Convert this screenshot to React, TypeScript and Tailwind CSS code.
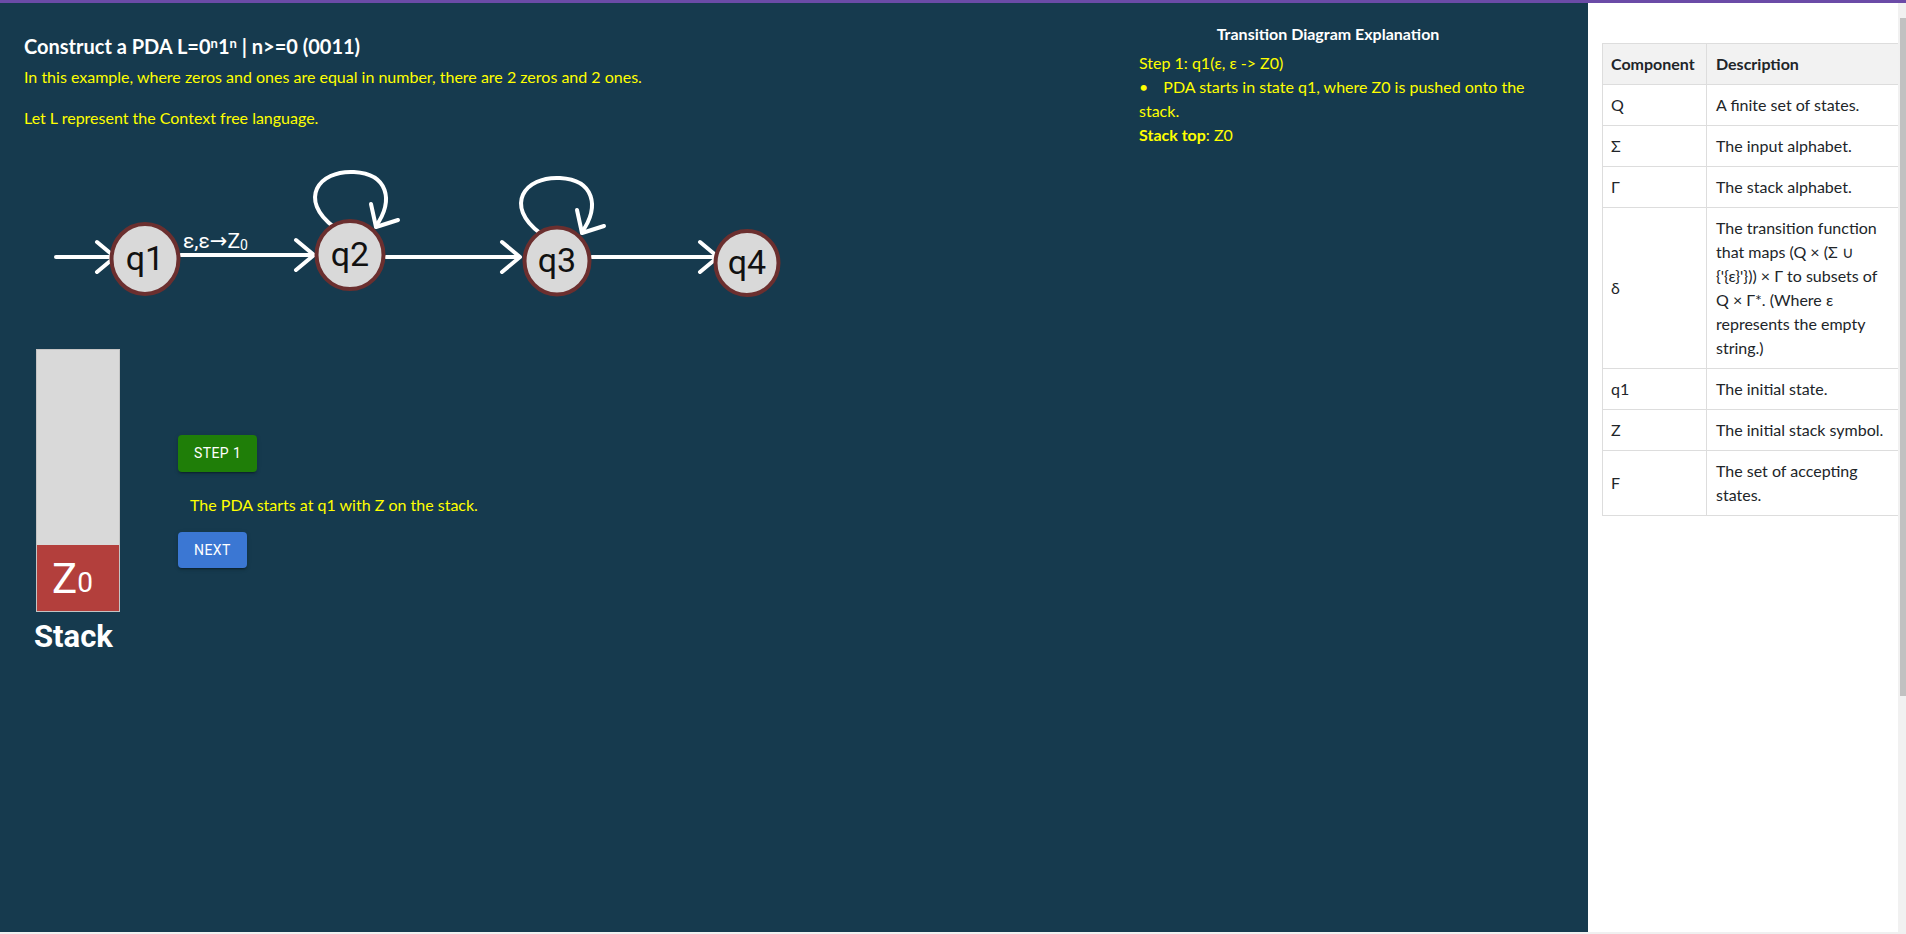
import React from 'react';

const COMPONENTS: { sym: string; desc: string }[] = [
  { sym: 'Q', desc: 'A finite set of states.' },
  { sym: 'Σ', desc: 'The input alphabet.' },
  { sym: 'Γ', desc: 'The stack alphabet.' },
  {
    sym: 'δ',
    desc: "The transition function that maps (Q × (Σ ∪ {'{ε}'})) × Γ to subsets of Q × Γ*. (Where ε represents the empty string.)",
  },
  { sym: 'q1', desc: 'The initial state.' },
  { sym: 'Z', desc: 'The initial stack symbol.' },
  { sym: 'F', desc: 'The set of accepting states.' },
];

const STATES = [
  { id: 'q1', cx: 145, cy: 95, rx: 33.5, ry: 35 },
  { id: 'q2', cx: 350, cy: 91, rx: 33.5, ry: 34 },
  { id: 'q3', cx: 557, cy: 97, rx: 32.5, ry: 33.5 },
  { id: 'q4', cx: 747, cy: 99, rx: 31.5, ry: 32 },
];

const Arrow: React.FC<{ x1: number; x2: number; y: number }> = ({ x1, x2, y }) => (
  <g>
    <line x1={x1} y1={y} x2={x2 - 2} y2={y} />
    <polyline points={`${x2 - 18},${y - 15} ${x2},${y} ${x2 - 18},${y + 15}`} fill="none" />
  </g>
);

const Loop: React.FC<{ dx: number; dy: number }> = ({ dx, dy }) => (
  <g transform={`translate(${dx} ${dy})`}>
    <path d="M 334 63 C 298 36, 318 6, 354 8 C 388 10, 394 36, 376 62" fill="none" />
    <polyline points="371,40 376,63 398,56" fill="none" />
  </g>
);

function Diagram() {
  return (
    <svg width="800" height="145" viewBox="0 0 800 145" className="block">
      <g stroke="#ffffff" strokeWidth="4" strokeLinecap="round" strokeLinejoin="round">
        <Arrow x1={56} x2={115} y={93} />
        <Arrow x1={181} x2={314} y={91} />
        <Arrow x1={386} x2={520} y={93} />
        <Arrow x1={592} x2={718} y={93} />
        <Loop dx={0} dy={0} />
        <Loop dx={206} dy={6} />
      </g>
      <text x="183" y="84" fill="#ffffff" fontSize="21" fontFamily="Roboto, sans-serif">
        ε,ε<tspan fontFamily="'DejaVu Sans', sans-serif" fontSize="21">→</tspan>Z
        <tspan fontSize="14" dy="2">0</tspan>
      </text>
      {STATES.map((s) => (
        <g key={s.id}>
          <ellipse cx={s.cx} cy={s.cy} rx={s.rx} ry={s.ry} fill="#d9d9d9" stroke="#6b2f2f" strokeWidth="4" />
          <text
            x={s.cx}
            y={s.cy + 11}
            textAnchor="middle"
            fill="#111111"
            fontSize="34"
            fontFamily="Roboto, sans-serif"
          >
            {s.id}
          </text>
        </g>
      ))}
    </svg>
  );
}

const btnShadow =
  'shadow-[0_3px_1px_-2px_rgba(0,0,0,0.2),0_2px_2px_0_rgba(0,0,0,0.14),0_1px_5px_0_rgba(0,0,0,0.12)]';

export default function App() {
  return (
    <div className="h-[934px] overflow-hidden flex flex-col font-['Lato',sans-serif]">
      <div className="h-[3px] bg-[#6b4ba7] shrink-0" />
      <div className="flex h-[929px]">
        {/* left: problem, diagram, stack */}
        <div className="w-[1588px] shrink-0 bg-[#163a4e] flex">
          <div className="w-[1128px] shrink-0">
            <div className="pl-[24px] pt-[30px]">
              <h1 className="text-[20px] leading-[26px] font-bold text-white">
                Construct a PDA L=0<sup className="text-[13px]">n</sup>1<sup className="text-[13px]">n</sup> | n&gt;=0 (0011)
              </h1>
              <p className="mt-[6px] text-[16px] leading-[24px] text-[#ffff00]">
                In this example, where zeros and ones are equal in number, there are 2 zeros and 2 ones.
              </p>
              <p className="mt-[17px] text-[16px] leading-[24px] text-[#ffff00]">
                Let L represent the Context free language.
              </p>
            </div>

            <div className="mt-[34px]">
              <Diagram />
            </div>

            <div className="mt-[40px] flex">
              <div className="pl-[36px] w-[120px] shrink-0">
                <div className="w-[84px] h-[263px] border border-[#c4c4c4] flex flex-col">
                  <div className="flex-1 bg-[#d9d9d9]" />
                  <div className="h-[66px] bg-[#b33f3c] flex items-center pl-[15px] pt-[2px] text-white font-['Roboto',sans-serif] leading-none">
                    <span className="text-[42px]">Z</span>
                    <span className="text-[28px] mt-[8px]">0</span>
                  </div>
                </div>
                <div className="mt-[7px] -ml-[2px] text-[31px] leading-[36px] font-bold text-white font-['Roboto',sans-serif]">
                  Stack
                </div>
              </div>

              <div className="ml-[58px] pt-[86px] flex flex-col items-start">
                <button
                  className={`h-[37px] px-[16px] rounded-[4px] bg-[#1f7e08] text-white text-[14px] font-normal tracking-[0.4px] font-['Roboto',sans-serif] ${btnShadow}`}
                >
                  STEP 1
                </button>
                <p className="mt-[21px] ml-[12px] text-[16px] leading-[24px] text-[#ffff00]">
                  The PDA starts at q1 with Z on the stack.
                </p>
                <button
                  className={`mt-[15px] h-[36px] px-[16px] rounded-[4px] bg-[#3b77d3] text-white text-[14px] font-normal tracking-[0.4px] font-['Roboto',sans-serif] ${btnShadow}`}
                >
                  NEXT
                </button>
              </div>
            </div>
          </div>

          {/* explanation */}
          <div className="w-[400px] shrink-0 pt-[19px]">
            <h2 className="text-center text-[16px] leading-[24px] font-bold text-white">
              Transition Diagram Explanation
            </h2>
            <div className="mt-[5px] pl-[11px] text-[16px] leading-[24px] text-[#ffff00]">
              <p>Step 1: q1(ε, ε -&gt; Z0)</p>
              <p>
                <span className="pr-[15px]">•</span>PDA starts in state q1, where Z0 is pushed onto the stack.
              </p>
              <p>
                <span className="font-bold">Stack top</span>: Z0
              </p>
            </div>
          </div>
        </div>

        {/* right: components table */}
        <div className="flex-1 bg-white flex">
          <div className="w-[310px] shrink-0 pt-[40px] pl-[14px]">
            <table className="w-[296px] border-collapse text-[16px] leading-[24px] text-[#212529] table-fixed">
              <colgroup>
                <col className="w-[104px]" />
                <col className="w-[192px]" />
              </colgroup>
              <thead>
                <tr className="bg-[#f2f2f2]">
                  <th className="border border-[#dddddd] px-[8px] py-[8px] text-left font-bold">Component</th>
                  <th className="border border-[#dddddd] px-[9px] py-[8px] text-left font-bold">Description</th>
                </tr>
              </thead>
              <tbody>
                {COMPONENTS.map((row) => (
                  <tr key={row.sym}>
                    <td className="border border-[#dddddd] px-[8px] py-[8px] align-middle">{row.sym}</td>
                    <td className="border border-[#dddddd] px-[9px] py-[8px] align-middle">{row.desc}</td>
                  </tr>
                ))}
              </tbody>
            </table>
          </div>
          {/* scrollbar */}
          <div className="flex-1 bg-[#f1f1f1] pt-[15px] pl-[2px]">
            <div className="h-[678px] bg-[#c1c1c1]" />
          </div>
        </div>
      </div>
      <div className="h-[2px] bg-[#f0f0f0] shrink-0" />
    </div>
  );
}
